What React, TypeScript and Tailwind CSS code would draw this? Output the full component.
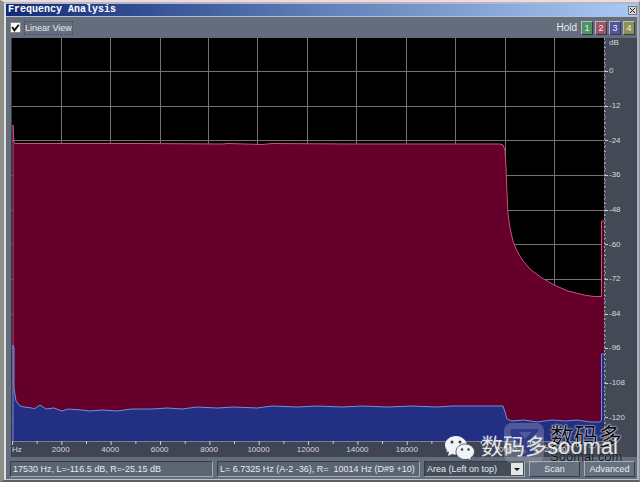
import React from 'react';

const DB_LABELS = ['0', '-12', '-24', '-36', '-48', '-60', '-72', '-84', '-96', '-108', '-120'];
const HZ_LABELS = ['2000', '4000', '6000', '8000', '10000', '12000', '14000', '16000', '18000', '20000', '22000'];

const HOLD_BUTTONS = [
    { label: '1', color: 'bg-[#4f9460]' },
    { label: '2', color: 'bg-[#a05464]' },
    { label: '3', color: 'bg-[#5452a4]' },
    { label: '4', color: 'bg-[#8f9150]' },
];

// Chart units: 592 wide (0 - 24 kHz), 403 high (+11 dB - -128 dB)
const GRID_X = [49, 98, 148, 196, 245, 295, 344, 394, 443, 493, 542];
const GRID_Y = [33, 68, 102, 137, 172, 206, 241, 276, 310, 345, 379];

const RIGHT_LINE =
    'M1 403 V87 L2 105 L4 105.5 H30 H130 L210 106 L216 105.5 L250 106.5 L260 105.5 L340 106 H488 L491 107 L493 112 L494 130 L495 155 L496 176 L498 190 L501 203 L505 213 L511 223 L519 232 L530 240 L542 247 L556 253 L572 257 L582 258.5 L589.5 258.5 V183 H592';
const LEFT_LINE =
    'M1 403 V307 L2 310 V350 L4 363 L8 368 L12 369 L20 370 L22 371 L25 369 L28 367 L31 369 L34 371 L42 370 L50 373 L56 371 L70 372 L78 373 L90 372 L105 373 L120 371 L140 371 L155 370 L170 371 L185 369 L205 370 L222 369 L245 370 L260 368 L285 369 L305 368 L330 369 L350 368 L375 369 L400 368 L425 369 L440 368 L470 368 H491 L493 374 L495 381 L500 383 L512 382 L525 384 L540 382 L553 383 L565 382 L578 384 H588 L589.500 382 V316 H592';

const SpectrumChart: React.FC = () => (
    <svg viewBox="0 0 592 403" preserveAspectRatio="none" className="block w-full h-full bg-black">
        <g stroke="#747472" strokeWidth="1">
            {GRID_X.map((x) => (
                <line key={x} x1={x + 0.5} x2={x + 0.5} y1="0" y2="403" />
            ))}
            {GRID_Y.map((y) => (
                <line key={y} x1="0" x2="592" y1={y + 0.5} y2={y + 0.5} />
            ))}
        </g>
        <path d={`${RIGHT_LINE} V403 Z`} fill="#640029" />
        <path d={RIGHT_LINE} fill="none" stroke="#c8507f" />
        <path d={`${LEFT_LINE} V403 Z`} fill="#232f82" />
        <path d={LEFT_LINE} fill="none" stroke="#6f8fe0" />
    </svg>
);

const DbTicks: React.FC = () => (
    <svg viewBox="0 0 5 403" preserveAspectRatio="none" className="block w-[5px] h-full">
        <line x1="0.5" x2="0.5" y1="0" y2="403" stroke="#a590ae" strokeDasharray="2 2" />
        {Array.from({ length: 69 }, (_, i) => (
            <line key={i} x1="1" x2="2" y1={4 + i * 5.77} y2={4 + i * 5.77} stroke="#b5bac3" />
        ))}
        {GRID_Y.map((y) => (
            <line key={y} x1="1" x2="4" y1={y + 0.5} y2={y + 0.5} stroke="#c8ccd3" />
        ))}
    </svg>
);

const HzTicks: React.FC = () => (
    <svg viewBox="0 0 592 4" preserveAspectRatio="none" className="block w-full h-1">
        <line x1="0" x2="592" y1="0.5" y2="0.5" stroke="#777f9b" />
        {Array.from({ length: 24 }, (_, i) => (
            <line key={i} x1={0.5 + i * 24.67} x2={0.5 + i * 24.67} y1="0" y2={i % 2 ? 3 : 4} stroke="#c8ccd3" />
        ))}
    </svg>
);

const WeChatIcon: React.FC = () => (
    <svg viewBox="0 0 30 26" className="w-[30px] h-[26px]">
        <path d="M11 1C5 1 0 5 0 10c0 3 1.600 5.400 4 7l-1 4 4-2c1.300.4 2.600.5 4 .5 6 0 11-4 11-9S17 1 11 1z" fill="#f2f3f5" />
        <circle cx="7" cy="7" r="1.500" fill="#343a50" />
        <circle cx="15" cy="7" r="1.500" fill="#343a50" />
        <path d="M20 9c-5 0-9 3.400-9 7.700s4 7.800 9 7.800c1 0 2-.1 3-.4l3.500 1.700-.8-3c2.300-1.400 3.800-3.600 3.800-6.100C29.500 12.400 25 9 20 9z" fill="#f2f3f5" stroke="#3c4358" strokeWidth="0.800" />
        <circle cx="17" cy="14.500" r="1.200" fill="#343a50" />
        <circle cx="23.500" cy="14.500" r="1.200" fill="#343a50" />
    </svg>
);

const Watermark: React.FC = () => (
    <div className="absolute right-0 bottom-0 w-[192px] h-[56px] pointer-events-none">
        <svg viewBox="0 0 40 40" className="absolute left-[59px] top-0 w-10 h-10">
            <rect width="40" height="40" rx="8" fill="#a8abc0" fillOpacity="0.35" />
            <path d="M8 6h25c2 0 2 1 1 2L22 20l8 9c2 2 1 4-2 4H14l9-4-13-13C6 12 5 8 8 6zm7 3 6 7 7-7z" fill="#27318a" fillOpacity="0.8" />
        </svg>
        <div className="absolute left-[105px] top-0 flex flex-col font-['Liberation_Sans','Noto_Sans_CJK_SC',sans-serif] text-[#0c0e18]">
            <span className="text-[24px] leading-7 [text-shadow:0_0_1px_#fff,0_0_1px_#fff,0_0_2px_#ccc]">数码多</span>
            <span className="text-[13px] leading-3 [text-shadow:0_0_1px_#aaa]">Soomal.com</span>
        </div>
        <div className="absolute left-0 top-3">
            <WeChatIcon />
        </div>
        <span className="absolute left-9 top-3 text-[22px] leading-6 text-white/85 whitespace-nowrap font-['Liberation_Sans','Noto_Sans_CJK_SC',sans-serif]">
            数码多soomal
        </span>
    </div>
);

const App: React.FC = () => {
    return (
        <div className="flex h-screen border-t-2 border-b-2 border-l-4 border-r border-t-[#e6dce2] border-b-[#5c6066] border-l-[#8d8e88] border-r-[#8d939c] font-['Liberation_Sans',sans-serif] text-[11px] text-[#e8ebef]">
            <div className="relative flex flex-col flex-1 min-w-0 overflow-hidden bg-[#646d7b] border-t-2 border-b border-l-2 border-r-2 border-t-[#b9b6c0] border-b-[#c0c4c8] border-l-[#dfe2e2] border-r-[#a9b2be]">
                <header className="flex items-center justify-between h-[13px] shrink-0 bg-linear-to-r from-[#142a78] via-[#6080b8] to-[#a9c9f5] border-b border-[#b4c0d0]">
                    <h1 className="pl-0.5 font-['Liberation_Mono',monospace] text-[10px] leading-3 font-bold text-white">Frequency Analysis</h1>
                    <button aria-label="Close" className="flex items-center justify-center w-[9px] h-[9px] bg-[#d5d8d8] border border-[#777]">
                        <svg viewBox="0 0 7 7" className="w-[7px] h-[7px]">
                            <path d="M1 1l5 5M6 1L1 6" stroke="#222" />
                        </svg>
                    </button>
                </header>

                <div className="flex items-center justify-between h-[21px] shrink-0 pl-1 pr-0.5">
                    <label className="flex items-center gap-1 text-[9px]">
                        <span className="relative flex w-[11px] h-[11px]">
                            <input type="checkbox" defaultChecked className="peer appearance-none w-[11px] h-[11px] bg-white border border-[#888]" />
                            <svg viewBox="0 0 10 10" className="absolute inset-0 hidden peer-checked:block">
                                <path d="M2 4.500l2 3 4-5" fill="none" stroke="#111" strokeWidth="1.800" />
                            </svg>
                        </span>
                        <span className="leading-3 outline-1 outline-dotted outline-[#454b57]">Linear View</span>
                    </label>
                    <div className="flex items-center gap-0.5">
                        <span className="pr-0.5 text-[10px]">Hold</span>
                        {HOLD_BUTTONS.map(({ label, color }) => (
                            <button
                                key={label}
                                className={`${color} w-3 h-[14px] text-[9px] leading-3 border border-t-[#b5bcc0] border-l-[#b5bcc0] border-b-[#343944] border-r-[#343944]`}
                            >
                                {label}
                            </button>
                        ))}
                    </div>
                </div>

                <main className="flex flex-1 min-h-0 pl-[5px]">
                    <div className="flex flex-col flex-1 min-w-0 border-l border-[#343b48] bg-[#3f4554]">
                        <div className="flex-1 min-h-0">
                            <SpectrumChart />
                        </div>
                        <div className="h-4 shrink-0">
                            <HzTicks />
                            <div className="flex text-[8px] leading-[10px] text-[#d5d9df]">
                                <span className="w-6">Hz</span>
                                {HZ_LABELS.map((hz) => (
                                    <span key={hz} className="flex-1 text-center">{hz}</span>
                                ))}
                                <span className="w-6" />
                            </div>
                        </div>
                    </div>
                    <div className="flex w-[33px] pb-4 bg-[#434955]">
                        <DbTicks />
                        <div className="flex flex-col flex-1 text-[8px] leading-[10px] text-[#d5d9df]">
                            <span className="h-4">dB</span>
                            {DB_LABELS.map((db) => (
                                <span key={db} className="flex flex-1 items-center">{db}</span>
                            ))}
                            <span className="h-1.5" />
                        </div>
                    </div>
                </main>

                <footer className="flex items-stretch gap-1 h-[22px] shrink-0 pt-1 pb-0.5 pl-1 pr-0.5 text-[9px] leading-[14px] whitespace-nowrap">
                    <p className="flex-1 pl-0.5 bg-[#5a6473] border border-t-[#363d4a] border-l-[#363d4a] border-b-[#a0a8b3] border-r-[#a0a8b3]">
                        17530 Hz, L=-116.5 dB, R=-25.15 dB
                    </p>
                    <p className="flex-1 pl-0.5 whitespace-pre bg-[#5a6473] border border-t-[#363d4a] border-l-[#363d4a] border-b-[#a0a8b3] border-r-[#a0a8b3]">
                        L= 6.7325 Hz (A-2 -36), R=  10014 Hz (D#9 +10)
                    </p>
                    <div className="relative w-[101px] shrink-0 bg-[#454c59] border border-t-[#343a46] border-l-[#343a46] border-b-[#a0a8b3] border-r-[#a0a8b3]">
                        <select aria-label="Display style" className="block appearance-none w-full h-full pl-0.5 text-[9px] bg-transparent">
                            <option>Area (Left on top)</option>
                        </select>
                        <svg viewBox="0 0 12 12" className="absolute right-px top-px w-3 h-3 bg-[#e4e6e8] pointer-events-none">
                            <path d="M3 5h6L6 8z" fill="#111" />
                        </svg>
                    </div>
                    <button className="w-[51px] shrink-0 bg-[#657080] border border-t-[#a7afba] border-l-[#a7afba] border-b-[#343a46] border-r-[#343a46]">Scan</button>
                    <button className="w-[51px] shrink-0 bg-[#657080] border border-t-[#a7afba] border-l-[#a7afba] border-b-[#343a46] border-r-[#343a46]">Advanced</button>
                </footer>

                <Watermark />
            </div>
        </div>
    );
};

export default App;
